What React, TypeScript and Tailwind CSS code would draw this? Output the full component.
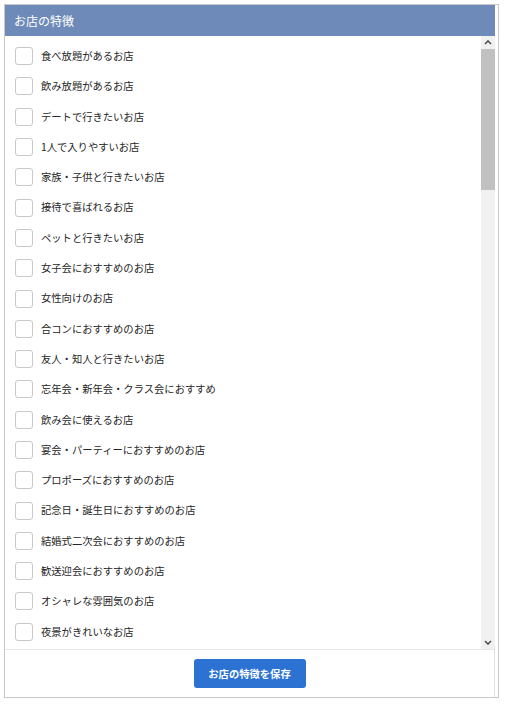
import React from "react";

const features: string[] = [
  "食べ放題があるお店",
  "飲み放題があるお店",
  "デートで行きたいお店",
  "1人で入りやすいお店",
  "家族・子供と行きたいお店",
  "接待で喜ばれるお店",
  "ペットと行きたいお店",
  "女子会におすすめのお店",
  "女性向けのお店",
  "合コンにおすすめのお店",
  "友人・知人と行きたいお店",
  "忘年会・新年会・クラス会におすすめ",
  "飲み会に使えるお店",
  "宴会・パーティーにおすすめのお店",
  "プロポーズにおすすめのお店",
  "記念日・誕生日におすすめのお店",
  "結婚式二次会におすすめのお店",
  "歓送迎会におすすめのお店",
  "オシャレな雰囲気のお店",
  "夜景がきれいなお店",
];

const FeatureRow: React.FC<{ label: string }> = ({ label }) => (
  <label className="flex h-[30.3px] shrink-0 items-center gap-[8px]">
    <span className="h-[18px] w-[18px] shrink-0 rounded-[3px] border border-[#c9c9c9] bg-white" />
    <span className="text-[10.3px] leading-none text-[#262626]">{label}</span>
  </label>
);

const ScrollBar: React.FC = () => (
  <div className="flex w-[14px] shrink-0 flex-col bg-[#f1f1f1]">
    <div className="flex h-[13px] items-center justify-center">
      <svg width="8" height="5" viewBox="0 0 8 5">
        <path d="M1 4 L4 1 L7 4" fill="none" stroke="#505050" strokeWidth="1.6" />
      </svg>
    </div>
    <div className="h-[141px] bg-[#c1c1c1]" />
    <div className="flex-1" />
    <div className="flex h-[14px] items-center justify-center">
      <svg width="8" height="5" viewBox="0 0 8 5">
        <path d="M1 1 L4 4 L7 1" fill="none" stroke="#505050" strokeWidth="1.6" />
      </svg>
    </div>
  </div>
);

export default function App() {
  return (
    <div
      className="h-[704px] w-[505px] bg-white pl-[4px] pt-[4px]"
      style={{ fontFamily: '"Noto Sans CJK JP", "Noto Sans", sans-serif' }}
    >
      <div className="flex h-[694px] w-[495px] flex-col border border-[#c8c8c8] pr-[3px]">
        <div className="flex h-[31px] shrink-0 items-center bg-[#6e8ab8] px-[9px] text-[12px] text-white">
          お店の特徴
        </div>
        <div className="flex h-[614px] shrink-0 border-b border-[#e6e6e6]">
          <div className="flex flex-1 flex-col overflow-hidden pl-[10px] pt-[5px]">
            {features.map((f) => (
              <FeatureRow key={f} label={f} />
            ))}
          </div>
          <ScrollBar />
        </div>
        <div className="flex flex-1 items-center justify-center border-r border-[#e0e0e0]">
          <button className="h-[29px] w-[112px] rounded-[3px] bg-[#2b72d2] text-[10.3px] font-bold text-white">
            お店の特徴を保存
          </button>
        </div>
      </div>
    </div>
  );
}
